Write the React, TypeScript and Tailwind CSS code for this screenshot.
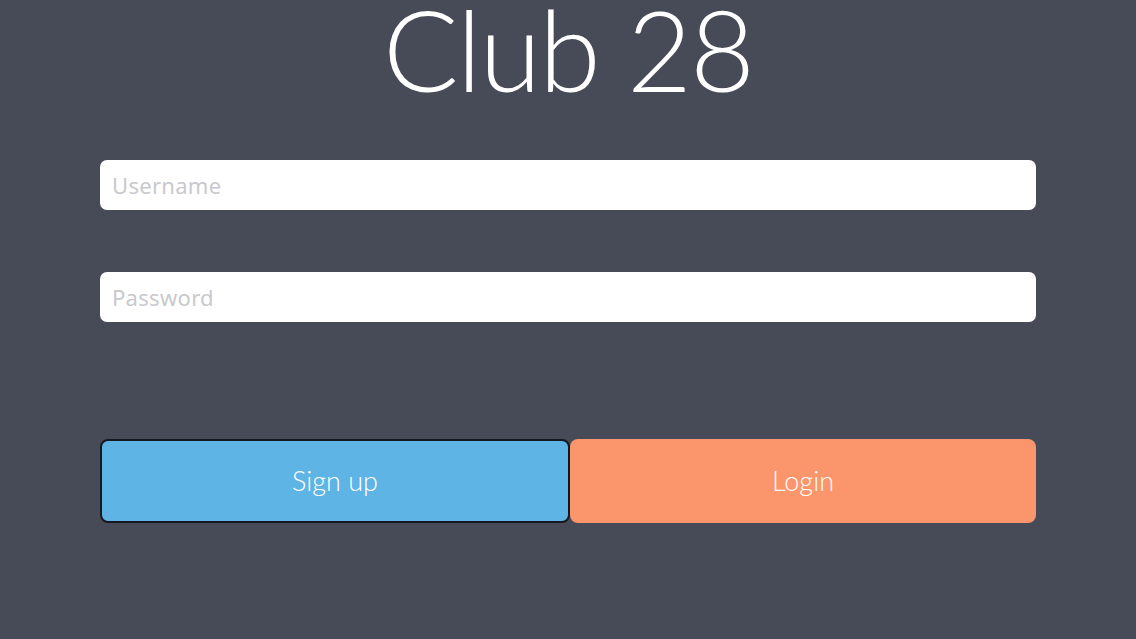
export default function App() {
  return (
    <div
      className="w-full h-[639px] bg-[#474a57] flex flex-col px-[100px] overflow-hidden"
      style={{ fontFamily: "Lato, 'Noto Sans', sans-serif" }}
    >
      <h1 className="text-center text-white font-light text-[112px] leading-none mt-[-7px] h-[167px] tracking-[-2px]">
        Club 28
      </h1>
      <input
        type="text"
        placeholder="Username"
        className="h-[50px] w-full rounded-[7px] bg-white px-3 text-[22px] tracking-[0.3px] text-gray-800 placeholder:text-[#c9c9ce] outline-none font-['Noto_Sans',sans-serif]"
      />
      <input
        type="password"
        placeholder="Password"
        className="mt-[62px] h-[50px] w-full rounded-[7px] bg-white px-3 text-[22px] tracking-[0.3px] text-gray-800 placeholder:text-[#c9c9ce] outline-none font-['Noto_Sans',sans-serif]"
      />
      <div className="mt-[117px] flex">
        <button className="flex-1 h-[84px] rounded-[8px] border-2 border-[#15181f] bg-[#5fb4e6] text-white text-[27px] font-light">
          Sign up
        </button>
        <button className="flex-1 h-[84px] rounded-[8px] bg-[#fb956b] text-white text-[27px] font-light">
          Login
        </button>
      </div>
    </div>
  );
}
